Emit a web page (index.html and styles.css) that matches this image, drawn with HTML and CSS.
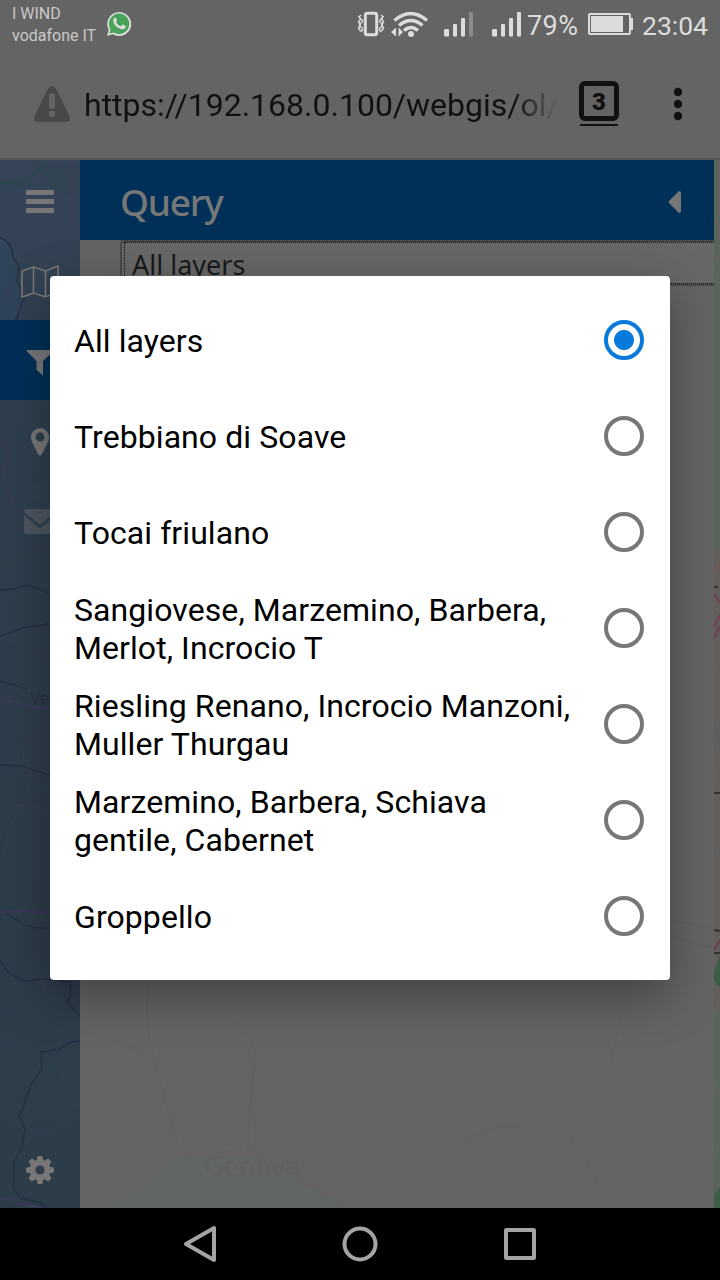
FILE: index.html
```html
<!DOCTYPE html>
<html lang="en">
<head>
<meta charset="utf-8">
<title>Query</title>
<link rel="stylesheet" href="styles.css">
</head>
<body>
<div class="screen">
  <header class="status">
    <div class="carriers"><span>I WIND</span><span>vodafone IT</span></div>
    <svg class="whatsapp" width="26" height="26" viewBox="0 0 26 26"><path d="M1 25 2.700 18.800A12 12 0 1 1 7 23.300Z" fill="#dcdcdc"/><path d="M3.300 22.600 4.600 18.400A10.200 10.200 0 1 1 7.800 21.500Z" fill="#47a357"/><path d="M8.200 7.100c.8-.9 1.600-.6 2 .3l.8 1.900c.2.6-.1 1-.9 1.900 1 2 2.500 3.200 4.600 4.100l1.200-1.400c.4-.4.8-.4 1.200-.2l2.200 1.100c.7.300.6.9.3 1.700-.7 1.500-2.500 2.200-4.300 1.700-4-1-7.400-4.300-8-7.600-.2-1.300.1-2.600.9-3.500Z" fill="#dcdcdc"/></svg>
    <div class="indicators">
      <svg class="signals" width="170" height="28" viewBox="356 10 170 28" fill="#dcdcdc">
        <rect x="365.300" y="13.300" width="11.400" height="21.400" rx="2" fill="none" stroke="#dcdcdc" stroke-width="3"/>
        <path d="M361 15q-3 2 0 4t0 4 0 4 0 5M358.500 16l2 3-2 3 2 3-2 3 2 3M381 15q3 2 0 4t0 4 0 4 0 5M383.500 16l-2 3 2 3-2 3 2 3-2 3" fill="none" stroke="#dcdcdc" stroke-width="1.500"/>
        <g fill="none" stroke="#dcdcdc" stroke-width="3.500"><path d="M394.500 20.500q16-14 32.500 0M399 25.500q12-10 23.500 0M404 30.500q7-6 14 0"/></g>
        <circle cx="411" cy="34" r="3"/><path d="m391 32 5-4.500v9ZM403 32l-4.500-4.500v9Z"/>
        <rect x="444" y="29" width="5" height="7.500" rx="1"/><rect x="453" y="24" width="4" height="12.500" rx="1"/><rect x="461" y="18" width="4" height="18.500" rx="1"/><rect x="469" y="12" width="4" height="24.500" rx="1" fill="#8b8b8b"/>
        <rect x="492" y="29" width="5" height="7.500" rx="1"/><rect x="501" y="24" width="4" height="12.500" rx="1"/><rect x="509" y="18" width="4" height="18.500" rx="1"/><rect x="517" y="12" width="4" height="24.500" rx="1"/>
      </svg>
      <span class="battery-level">79%</span>
      <svg class="battery" width="46" height="24" viewBox="0 0 46 24"><rect x="1" y="2" width="41" height="20" rx="1" fill="none" stroke="#dcdcdc" stroke-width="2"/><path d="M3 4h32v16H3z" fill="#dcdcdc"/><path d="M42 7h2v10h-2" fill="none" stroke="#dcdcdc" stroke-width="2"/></svg>
      <span class="clock">23:04</span>
    </div>
  </header>
  <div class="browser">
    <svg class="warning" width="36" height="36" viewBox="0 0 36 36"><path d="M13.800 3Q18-3 22.200 3L35 29Q38 36 31 36H5Q-2 36 1 29Z" fill="#484848"/><path d="M18 10v10" stroke="#646464" stroke-width="6" stroke-linecap="round"/><circle cx="18" cy="28" r="3.200" fill="#646464"/></svg>
    <div class="url">https://192.168.0.100/webgis/ol/</div>
    <div class="tabs"><span class="tab-count">3</span></div>
    <svg class="more" width="10" height="34" viewBox="0 0 10 34" fill="#111"><circle cx="5" cy="5" r="4.200"/><circle cx="5" cy="17" r="4.200"/><circle cx="5" cy="29" r="4.200"/></svg>
  </div>
  <main class="page">
    <nav class="sidebar">
      <svg class="side-map" width="80" height="1048" viewBox="0 160 80 1048" fill="none" stroke-linejoin="round">
        <g class="map-forest"><path d="M35 160q30 10 45 5v35q-25 0-45-40ZM20 490q30-18 60-7v30q-35-4-60-23Z"/></g>
        <path class="map-water" d="M0 238q14 8 12 26 10 18 5 56H0Z"/>
        <g class="road-green"><path d="M0 183q12-2 17 3l20-14 8-12M0 194l7-6"/></g>
        <g class="road-dark"><path d="M0 237q13 6 13 20l6 10-2 14 7 17-8 22M0 590l15-1 12-4 23 8M0 636l23-8 27-4M0 681l27 8M0 765l20 1 18 5 12 5M5 912l19 13q13 4 26 3M0 961q8 15 25 20l18-2 27 3 1 13-4 7 13 14M80 1041q-12 0-20 8l-19 3 1 16-11 17-9 25-3 4 6 15-3 18-8 15v27l6 9 18 4 12 9 12-2 14 10"/></g>
        <g class="road-purple"><path d="M69 160l6 14-5 10 2 21-3 15 9 6M0 697q25 10 50 12M3 912l20-1 27 2M0 1199l9-1 10 6 25 4M3 300l6-8 5-12M3 440l7 14-6 15 3 23 12 20 18 18"/></g>
        <g class="road-brown"><path d="M0 569q18-12 50-23M8 640q31 8 42 30M50 714q-8 13-20 25-10 12-5 22l8 15-9 27q-18 23-21 57M0 805q25 0 50 4M43 980q3 18 13 23l13 2M80 1045q-21 6-18 40l8 16 10 7M0 1112l18 12"/></g>
        <path class="road-blue" d="M0 776q14-12 24 2t12 10 14 0M0 1014q26-2 28-17M0 1040l13 10M28 1128l14 8 35-20"/>
        <text x="30" y="704">Ve</text>
      </svg>
      <div class="side-item"><svg width="28" height="24" viewBox="0 0 28 24" fill="#777"><rect y="0" width="28" height="5" rx="1"/><rect y="9" width="28" height="5" rx="1"/><rect y="18" width="28" height="5" rx="1"/></svg></div>
      <div class="side-item"><svg width="38" height="34" viewBox="0 0 38 34" fill="none" stroke="#777" stroke-width="1.600"><path d="M1 6 12.500 2 24.500 6 37 1V27L24.500 32 12.500 28 1 32ZM12.500 2V28M24.500 6V32"/></svg></div>
      <div class="side-item active"><svg width="26" height="26" viewBox="0 0 26 26"><path d="M0 0H26V1.500L16 11V25.500L9.500 20V11L0 1.500Z" fill="#777"/></svg></div>
      <div class="side-item"><svg width="18" height="28" viewBox="0 0 18 28"><path fill-rule="evenodd" d="M9 0A9 9 0 0 0 0 9q0 3 1.500 6L7 26q2 3 4 0l5.500-11Q18 12 18 9A9 9 0 0 0 9 0Zm0 4.500a4.500 4.500 0 1 1 0 9 4.500 4.500 0 0 1 0-9Z" fill="#777"/></svg></div>
      <div class="side-item"><svg width="32" height="26" viewBox="0 0 32 26"><path d="M2 0H30Q32 0 32 3L17 15.500q-1 .8-2 0L0 3Q0 0 2 0ZM0 6l14 12q2 1.500 4 0L32 6V23q0 2-2 2H2q-2 0-2-2Z" fill="#4c5660"/></svg></div>
      <div class="side-item settings"><svg width="28" height="28" viewBox="-14 -14 28 28"><g fill="#777"><path id="teeth" d="M-3-11-2.300-14H2.300L3-11V11L2.300 14H-2.300L-3 11Z"/><use href="#teeth" transform="rotate(45)"/><use href="#teeth" transform="rotate(90)"/><use href="#teeth" transform="rotate(135)"/><circle r="10.500"/></g><circle r="4.600" fill="#2e3e4b"/></svg></div>
    </nav>
    <section class="panel">
      <div class="panel-title"><h1>Query</h1><svg width="13" height="22" viewBox="0 0 13 22"><path d="M11 0q2 0 2 2v18q0 2-2 2L1 12q-1-1 0-2Z" fill="#777"/></svg></div>
      <div class="select"><div class="select-focus">All layers</div></div>
      <svg class="panel-map" width="634" height="922" viewBox="80 286 634 922" fill="none">
        <path class="panel-sea" d="M105 1208q45-22 75-52h75q55 38 110 52Z"/>
        <path class="panel-road" d="M80 1030q45 10 70 28M150 980q-8 35 4 80l24 85M215 980l40 70-8 105M560 1128l50-60 10-50 40-45M565 1128l25 40 22 40M440 1160q45-40 80-33M180 1153l75-2 90 57M670 920l44 9M670 936l44 12"/>
        <text x="204" y="1176">Genova</text>
      </svg>
    </section>
    <svg class="map-edge" width="6" height="1048" viewBox="0 160 6 1048" fill="none">
      <path fill="#5b645b" d="M0 160h6v390H0ZM0 1010h6v198H0Z"/>
      <path fill="#3f5c48" d="M6 955 0 972v10l6 5ZM6 1188l-6 6v14h6Z"/>
      <path stroke="#6e625c" d="M0 223h6M0 257h6M0 669l6-2M0 776l6-1M0 1094l6-4"/>
      <path stroke="#7b5a51" stroke-width="1.500" d="M0 574l6-12"/>
      <path stroke="#713f51" stroke-width="2" d="M0 594l6 9M0 627l6-12M0 638l6-12M0 950l6-10"/>
      <path stroke="#333" stroke-width="2" d="M0 587h4M0 930l6 1M0 953h6M0 793h6"/>
      <path stroke="#4e626d" d="M0 722l6 25M0 850l6 4M0 1090l6-3M0 1148l6 10"/>
    </svg>
  </main>
  <footer class="navigation">
    <svg width="34" height="38" viewBox="0 0 34 38"><path d="M31 3v32L3 19Z"/></svg>
    <svg width="36" height="36" viewBox="0 0 36 36"><circle cx="18" cy="18" r="15.500"/></svg>
    <svg width="34" height="34" viewBox="0 0 34 34"><rect x="3" y="3" width="28" height="28" rx=".5"/></svg>
  </footer>
  <div class="dialog">
    <div class="option"><span>All layers</span><i class="radio checked"></i></div>
    <div class="option"><span>Trebbiano di Soave</span><i class="radio"></i></div>
    <div class="option"><span>Tocai friulano</span><i class="radio"></i></div>
    <div class="option"><span>Sangiovese, Marzemino, Barbera,<br>Merlot, Incrocio T</span><i class="radio"></i></div>
    <div class="option"><span>Riesling Renano, Incrocio Manzoni,<br>Muller Thurgau</span><i class="radio"></i></div>
    <div class="option"><span>Marzemino, Barbera, Schiava<br>gentile, Cabernet</span><i class="radio"></i></div>
    <div class="option"><span>Groppello</span><i class="radio"></i></div>
  </div>
</div>
</body>
</html>
```
FILE: styles.css
```css
* { box-sizing: border-box; }
body { margin: 0; }
svg { display: block; flex-shrink: 0; }
.screen { position: relative; display: flex; flex-direction: column; width: 720px; height: 1280px; overflow: hidden; background: #646464; font-family: Roboto, sans-serif; }
.status { display: flex; height: 50px; padding: 0 12px; color: #dcdcdc; }
.carriers { display: flex; flex-direction: column; width: 94px; padding-top: 3px; font-size: 16px; line-height: 22px; color: #c8c8c8; white-space: nowrap; }
.whatsapp { margin-top: 11px; }
.indicators { display: flex; margin-left: auto; font-size: 26.5px; line-height: 52px; }
.signals { margin-top: 10px; }
.battery-level { width: 54px; margin-left: 1px; font-size: 27px; letter-spacing: .4px; }
.battery { margin: 12px 0 0 7px; }
.clock { width: 66px; margin-left: 8px; }
.browser { display: flex; height: 110px; padding-left: 34px; border-bottom: 2px solid #565354; color: #111; }
.warning { margin-top: 36px; }
.url { width: 480px; margin-left: 14px; padding-top: 33px; font-size: 32px; line-height: 45px; white-space: nowrap; background: linear-gradient(90deg, #111 430px, #646464 474px); background-clip: text; color: transparent; }
.tabs { width: 40px; height: 46px; margin: 31px 0 0 15px; }
.tab-count { display: block; height: 40px; border: 5px solid #111; border-radius: 6px; text-align: center; font-size: 24px; font-weight: 900; line-height: 32px; }
.tabs::after { content: ""; display: block; height: 2px; margin: 3px 1px 0; background: #111; }
.more { margin: 37px 0 0 54px; }
.page { display: flex; height: 1048px; }
.sidebar { position: relative; display: flex; flex-direction: column; width: 80px; background: linear-gradient(#354457, #2f3f4e 25%, #2e3c4a 65%, #2c3d49); }
.side-map { position: absolute; inset: 0; }
.map-forest path { fill: #2f4750; opacity: .4; }
.map-water { fill: #2c4864; opacity: .45; }
.road-green, .road-dark, .road-purple, .road-brown { stroke-width: 1.8; opacity: .7; }
.road-green { stroke: #28494c; }
.road-dark { stroke: #222e43; }
.road-purple { stroke: #403a5c; }
.road-brown { stroke: #3d4046; stroke-width: 1.2; }
.road-blue { stroke: #294361; opacity: .6; }
.side-map text { fill: #263340; font: 17px "Noto Sans", sans-serif; }
.side-item { position: relative; display: flex; align-items: center; justify-content: center; height: 80px; padding-top: 4px; }
.side-item.active { padding-top: 6px; background: #002f58; }
.settings { margin-top: auto; padding-top: 3px; }
.panel { width: 634px; background: #646464; overflow: hidden; }
.panel-title { display: flex; align-items: center; justify-content: space-between; height: 80px; padding: 4px 33px 0 40px; background: #002f58; color: #777; }
.panel-title h1 { margin: 0; font: 500 37px/50px "Noto Sans", sans-serif; letter-spacing: -1.2px; }
.select { height: 46px; margin-left: 40px; border: 2px solid #484848; border-right: 0; border-radius: 4px 0 0 4px; background: #676767; }
.select-focus { height: 42px; margin-left: 2px; padding-left: 7px; border: 1px dotted #111; border-right: 0; color: #1a1a1a; font: 27px/44px "Noto Sans", sans-serif; }
.panel-sea { fill: #616563; }
.panel-road { stroke: #616161; }
.panel-map text { fill: #616161; font: 27px "Noto Sans", sans-serif; }
.map-edge { background: #635f5c; }
.navigation { display: flex; align-items: center; justify-content: space-between; height: 72px; padding: 0 183px; background: #000; }
.navigation svg { fill: none; stroke: #a4a4a4; stroke-width: 4; stroke-linejoin: round; }
.dialog { position: absolute; top: 276px; left: 50px; width: 620px; height: 704px; padding: 16px 26px 16px 24px; border-radius: 4px; background: #fff; box-shadow: 0 16px 48px rgba(0, 0, 0, .34); }
.option { display: flex; align-items: center; justify-content: space-between; height: 96px; color: #000; font-size: 32px; line-height: 38px; letter-spacing: .08px; white-space: nowrap; }
.option span { padding-top: 2px; }
.radio { width: 40px; height: 40px; border: 4px solid #777; border-radius: 50%; }
.radio.checked { border-color: #087adb; background: radial-gradient(circle, #087adb 9.5px, transparent 10.5px); }
```
